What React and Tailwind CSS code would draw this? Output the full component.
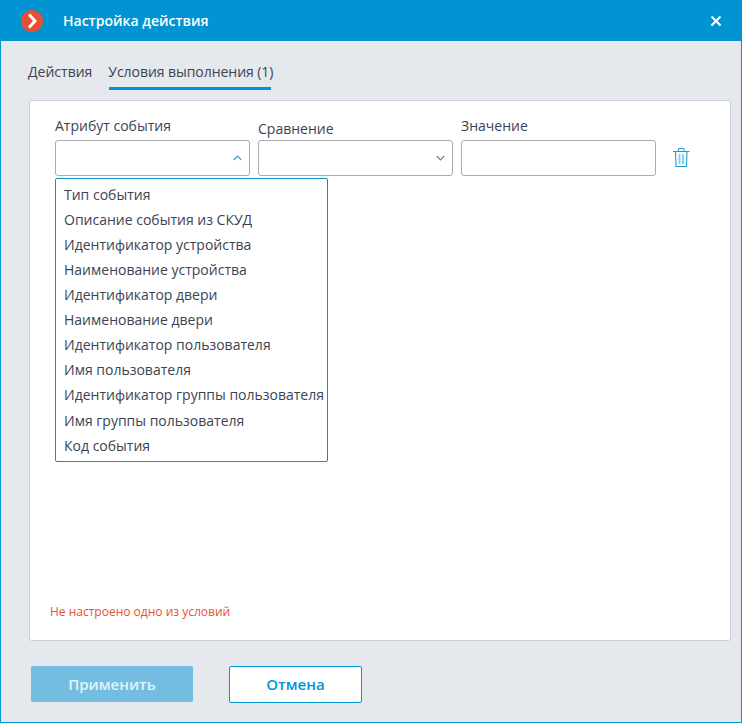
import React from 'react';

const options = [
  'Тип события',
  'Описание события из СКУД',
  'Идентификатор устройства',
  'Наименование устройства',
  'Идентификатор двери',
  'Наименование двери',
  'Идентификатор пользователя',
  'Имя пользователя',
  'Идентификатор группы пользователя',
  'Имя группы пользователя',
  'Код события',
];

function Chevron({ up }) {
  return (
    <svg width="9" height="6" viewBox="0 0 9 6" fill="none" className={up ? 'text-[#2ba3d9]' : 'text-[#7d8086]'}>
      <path d={up ? 'M0.7 5L4.5 1.2L8.3 5' : 'M0.7 1L4.5 4.8L8.3 1'} stroke="currentColor" strokeWidth="1.2" />
    </svg>
  );
}

function TrashIcon() {
  return (
    <svg width="17" height="19" viewBox="0 0 17 19" fill="none">
      <path d="M0 3.5H16.5" stroke="#1a9dd6" strokeWidth="1" />
      <path d="M5.5 3V0.5H11V3" stroke="#1a9dd6" strokeWidth="1" />
      <path d="M2.5 3.5L3 18.5H13.5L14 3.5" stroke="#1a9dd6" strokeWidth="1.1" />
      <path d="M6.5 6V16M10 6V16" stroke="#8ccdea" strokeWidth="2" />
    </svg>
  );
}

function App() {
  return (
    <div className="w-[742px] h-[723px] flex flex-col bg-[#e5e8ed] border border-t-0 border-[#0094d3] font-['Open_Sans',sans-serif] text-[#3c4352] overflow-hidden">
      <div className="h-[41px] -mx-px flex items-center bg-[#0094d3] text-white pl-[21px] pr-[20px] shrink-0">
        <svg width="22" height="22" viewBox="0 0 22 22">
          <circle cx="11" cy="11" r="11" fill="#e94f35" />
          <path d="M8 4.5L14 11L8 17.5" fill="none" stroke="white" strokeWidth="3" />
        </svg>
        <span className="ml-[20px] text-[14px] font-semibold">Настройка действия</span>
        <svg width="12" height="12" viewBox="0 0 12 12" className="ml-auto">
          <path d="M1.5 1.5L10.5 10.5M10.5 1.5L1.5 10.5" stroke="white" strokeWidth="2" />
        </svg>
      </div>

      <div className="flex pl-[27px] pt-[21px] h-[59px] shrink-0 text-[14px] leading-[20px]">
        <div>Действия</div>
        <div className="ml-[16px] tracking-[-0.05px]">
          <div>Условия выполнения (1)</div>
          <div className="h-[3px] mt-[5px] ml-px mr-[2px] bg-[#0094d3]" />
        </div>
      </div>

      <div className="relative ml-[28px] mr-[10px] h-[541px] shrink-0 bg-white rounded-[3px] border border-[#cbced4] pl-[25px] pt-[15px]">
        <div className="flex gap-[8px] text-[14px] leading-[20px]">
          <div className="relative w-[195px]">
            <div className="h-[24px]">Атрибут события</div>
            <div className="h-[36px] border border-[#a9abaf] rounded-[3px] bg-white flex items-center justify-end pr-[7px]">
              <Chevron up />
            </div>
          </div>
          <div className="w-[195px]">
            <div className="h-[24px] pt-[3px]">Сравнение</div>
            <div className="h-[36px] border border-[#a9abaf] rounded-[3px] bg-white flex items-center justify-end pr-[7px]">
              <Chevron />
            </div>
          </div>
          <div className="w-[195px]">
            <div className="h-[24px]">Значение</div>
            <div className="h-[36px] border border-[#a9abaf] rounded-[3px] bg-white" />
          </div>
          <div className="ml-[9px] pt-[32px]">
            <TrashIcon />
          </div>
        </div>

        <div className="absolute left-[25px] top-[77px] w-[273px] h-[284px] bg-white border border-[#0f8fc9] rounded-[2px] pl-[8px] pt-[2.7px] text-[14px]">
          {options.map((o) => (
            <div key={o} className="h-[25.1px] leading-[25px] whitespace-nowrap">{o}</div>
          ))}
        </div>

        <div className="absolute left-[20px] top-[503px] text-[12px] leading-[16px] text-[#e8503a]">
          Не настроено одно из условий
        </div>
      </div>

      <div className="flex pl-[30px] pt-[25px] text-[15px] font-semibold">
        <button className="w-[162px] h-[36px] rounded-[2px] bg-[#73bee0] text-[#e3f2f9]">Применить</button>
        <button className="ml-[36px] w-[133px] h-[37px] rounded-[2px] bg-white border border-[#0094d3] text-[#0094d3]">Отмена</button>
      </div>
    </div>
  );
}

export default App;
